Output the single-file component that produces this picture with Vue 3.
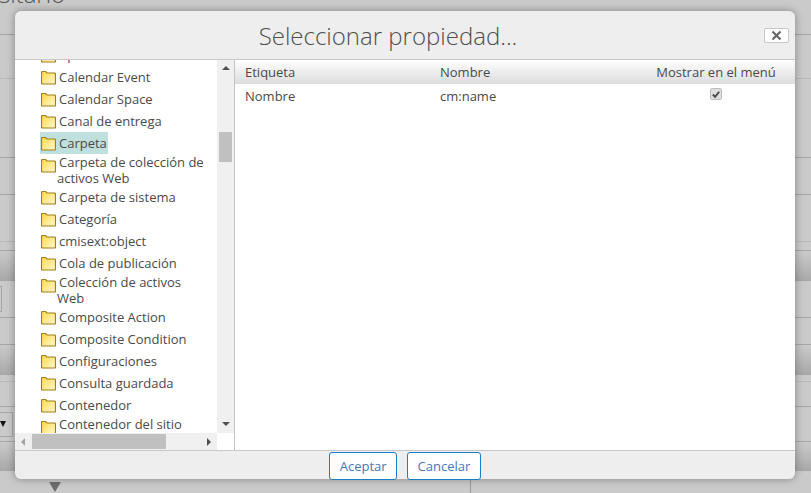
<template>
  <div class="page">
    <div class="backdrop">
      <div class="page-title">sitario</div>
      <div class="band band-34"></div>
      <div class="band band-44 soft"></div>
      <div class="band band-79"></div>
      <div class="band band-37"></div>
      <div class="band band-47 soft"></div>
      <div class="band band-9"></div>
      <div class="band band-30 shade"></div>
      <div class="band band-37 with-input"><span class="bg-input"></span></div>
      <div class="band band-27"></div>
      <div class="band band-30 shade"></div>
      <div class="band band-7 soft"></div>
      <div class="band band-25"></div>
      <div class="band band-35 with-select"><span class="bg-select"><i></i></span></div>
      <div class="band band-29 shade"></div>
      <div class="page-foot">
        <i class="foot-arrow"></i>
        <span class="foot-line"></span>
      </div>
    </div>

    <div class="dialog">
      <header class="dialog-head">
        <h2 class="dialog-title">Seleccionar propiedad...</h2>
        <button class="close-btn" type="button" aria-label="Cerrar">
          <svg width="11" height="11" viewBox="0 0 11 11">
            <path d="M1.500 1.500l8 8M9.500 1.500l-8 8" stroke="#666" stroke-width="2.2" fill="none" />
          </svg>
        </button>
      </header>

      <div class="dialog-body">
        <aside class="tree-pane">
          <div class="tree-view">
            <div class="tree-scroll">
              <ul class="tree">
                <li v-for="item in types" :key="item" class="tree-row">
                  <span class="node" :class="{ selected: item === 'Carpeta' }">
                    <svg class="folder" width="15" height="15" viewBox="0 0 15 15">
                      <path
                        d="M.500 13V2.500q0-1 1-1h3l1.500 1.500h7.500q1 0 1 1V13q0 1-1 1h-12q-1 0-1-1z"
                        fill="url(#folderFill)"
                        stroke="#a17f14"
                        stroke-width="1.200"
                      />
                    </svg>
                    <span class="node-label">{{ item }}</span>
                  </span>
                </li>
              </ul>
            </div>
            <div class="vbar">
              <i class="arrow up"></i>
              <div class="vthumb"></div>
              <i class="arrow down"></i>
            </div>
          </div>
          <div class="tree-foot">
            <div class="hbar">
              <i class="arrow left"></i>
              <div class="hthumb"></div>
              <i class="arrow right"></i>
            </div>
            <div class="corner"></div>
          </div>
        </aside>

        <section class="props">
          <div class="props-row props-head">
            <span>Etiqueta</span>
            <span>Nombre</span>
            <span class="menu-col">Mostrar en el menú</span>
          </div>
          <div v-for="prop in properties" :key="prop.name" class="props-row">
            <span>{{ prop.label }}</span>
            <span>{{ prop.name }}</span>
            <span class="menu-col">
              <span class="check">
                <svg v-if="prop.inMenu" width="11" height="11" viewBox="0 0 11 11">
                  <path d="M2 5.500l2.500 2.500L9 2.500" stroke="#444" stroke-width="2" fill="none" />
                </svg>
              </span>
            </span>
          </div>
        </section>
      </div>

      <footer class="dialog-foot">
        <button class="action" type="button">Aceptar</button>
        <button class="action" type="button">Cancelar</button>
      </footer>
    </div>

    <svg class="defs" width="0" height="0">
      <defs>
        <linearGradient id="folderFill" x1="0" y1="0" x2="1" y2="1">
          <stop offset="0" stop-color="#ffd84f" />
          <stop offset="1" stop-color="#fff8cf" />
        </linearGradient>
      </defs>
    </svg>
  </div>
</template>

<script setup>
const types = [
  'Aplicación',
  'Calendar Event',
  'Calendar Space',
  'Canal de entrega',
  'Carpeta',
  'Carpeta de colección de activos Web',
  'Carpeta de sistema',
  'Categoría',
  'cmisext:object',
  'Cola de publicación',
  'Colección de activos Web',
  'Composite Action',
  'Composite Condition',
  'Configuraciones',
  'Consulta guardada',
  'Contenedor',
  'Contenedor del sitio Web',
]

const properties = [
  { label: 'Nombre', name: 'cm:name', inMenu: true },
]
</script>

<style>
html,
body {
  margin: 0;
  background: #cacaca;
}
</style>

<style scoped>
.page {
  position: relative;
  width: 811px;
  height: 493px;
  overflow: hidden;
  background: #cacaca;
  font-family: "Open Sans", "Liberation Sans", sans-serif;
  font-size: 13px;
  color: #4a4a4a;
}
.backdrop {
  width: 811px;
  height: 493px;
}
.page-title {
  height: 0;
  margin-left: -1px;
  font-size: 24px;
  font-weight: 300;
  line-height: 0;
  color: #555;
  transform: translateY(-6px);
}
.band {
  box-sizing: border-box;
  border-bottom: 1px solid #a6a6a6;
}
.band.soft {
  border-bottom-color: #bababa;
}
.band.shade {
  background: linear-gradient(#cacaca, #a9a9a9);
}
.band-34 { height: 35px; }
.band-44 { height: 44px; }
.band-79 { height: 79px; }
.band-37 { height: 37px; }
.band-47 { height: 47px; }
.band-9 { height: 9px; }
.band-30 { height: 30px; }
.band-27 { height: 27px; }
.band-7 { height: 7px; }
.band-25 { height: 25px; }
.band-35 { height: 35px; }
.band-29 { height: 29px; }
.with-input,
.with-select {
  display: flex;
  align-items: center;
}
.bg-input {
  box-sizing: border-box;
  width: 2px;
  height: 26px;
  border: 1px solid #a6a6a6;
  border-left: 0;
}
.bg-select {
  display: flex;
  align-items: center;
  box-sizing: border-box;
  width: 13px;
  height: 25px;
  border: 1px solid #a6a6a6;
  border-left: 0;
}
.bg-select i {
  width: 0;
  height: 0;
  margin-left: 0;
  border-left: 3px solid transparent;
  border-right: 3px solid transparent;
  border-top: 6px solid #111;
}
.page-foot {
  display: flex;
  height: 23px;
  padding-left: 49px;
}
.foot-arrow {
  width: 0;
  height: 0;
  margin-top: 11px;
  border-left: 6px solid transparent;
  border-right: 6px solid transparent;
  border-top: 10px solid #6e6e6e;
}
.foot-line {
  width: 1px;
  margin-left: 409px;
  background: #999;
}

.dialog {
  position: absolute;
  top: 11px;
  left: 15px;
  display: flex;
  flex-direction: column;
  width: 780px;
  height: 468px;
  border-radius: 6px;
  background: #eeeeee;
  box-shadow: 0 0 8px rgba(0, 0, 0, 0.35);
}
.dialog-head {
  display: flex;
  align-items: center;
  box-sizing: border-box;
  height: 49px;
  padding-right: 6px;
  border-bottom: 1px solid #c8c8c8;
}
.dialog-title {
  flex: 1;
  margin: 0;
  font-size: 24px;
  font-weight: 300;
  line-height: 47px;
  text-align: center;
  color: #4f4f4f;
}
.close-btn {
  display: flex;
  align-items: center;
  justify-content: center;
  box-sizing: border-box;
  width: 25px;
  height: 15px;
  margin-left: 3px;
  margin-top: 1px;
  padding: 0;
  border: 1px solid #c8c8c8;
  border-radius: 2px;
  background: #fff;
}
.dialog-body {
  display: flex;
  flex: 1;
  min-height: 0;
  background: #fff;
}
.tree-pane {
  display: flex;
  flex-direction: column;
  box-sizing: border-box;
  width: 220px;
  border-right: 1px solid #c4c4c4;
}
.tree-view {
  display: flex;
  flex: 1;
  min-height: 0;
}
.tree-scroll {
  flex: 1;
  min-width: 0;
  overflow: hidden;
}
.tree {
  margin: -16px 0 0;
  padding: 0 7px 0 25px;
  list-style: none;
}
.tree-row {
  display: flex;
  box-sizing: border-box;
  min-height: 22px;
}
.node {
  display: flex;
  min-width: 0;
}
.node.selected {
  background: #bfe0dc;
}
.folder {
  flex: none;
  margin: 4px 1px 0;
}
.node-label {
  align-self: center;
  padding: 1px 1px 0 0;
  line-height: 15.5px;
  text-indent: 2px;
}
.vbar {
  display: flex;
  flex-direction: column;
  align-items: center;
  box-sizing: border-box;
  width: 17px;
  background: #f0f0f0;
}
.vthumb {
  width: 13px;
  height: 30px;
  margin-top: 62px;
  margin-bottom: auto;
  background: #c0c0c0;
}
.tree-foot {
  display: flex;
  height: 17px;
}
.hbar {
  display: flex;
  align-items: center;
  flex: 1;
  padding: 0 6px;
  background: #f0f0f0;
}
.hthumb {
  width: 134px;
  height: 15px;
  margin-left: 7px;
  margin-right: auto;
  background: #c0c0c0;
}
.corner {
  width: 17px;
  background: #fff;
}
.arrow {
  flex: none;
  width: 0;
  height: 0;
  border: 0 solid transparent;
}
.arrow.up {
  margin-top: 6px;
  border-width: 0 4px 4px;
  border-bottom-color: #505050;
}
.arrow.down {
  margin-bottom: 7px;
  border-width: 4px 4px 0;
  border-top-color: #505050;
}
.arrow.left {
  border-width: 4px 4px 4px 0;
  border-right-color: #a4a4a4;
}
.arrow.right {
  border-width: 4px 0 4px 4px;
  border-left-color: #505050;
}

.props {
  flex: 1;
  min-width: 0;
}
.props-row {
  display: grid;
  grid-template-columns: 195px 207px 1fr;
  align-items: center;
  height: 24px;
}
.props-row > span {
  padding-left: 10px;
}
.props-head {
  background: linear-gradient(#ffffff, #dcdcdc);
}
.props-row > .menu-col {
  display: flex;
  justify-content: center;
  padding: 0;
}
.check {
  display: flex;
  align-items: center;
  justify-content: center;
  box-sizing: border-box;
  width: 12px;
  height: 12px;
  margin-top: -4px;
  border: 1px solid #bdbdbd;
  border-radius: 2px;
  background: #dedede;
}
.dialog-foot {
  display: flex;
  justify-content: center;
  gap: 10px;
  box-sizing: border-box;
  height: 29px;
  padding-top: 1px;
  border-top: 1px solid #c8c8c8;
}
.action {
  height: 28px;
  padding: 0 9.5px;
  border: 1px solid #1a7fc4;
  border-radius: 3px;
  background: #fff;
  font: inherit;
  color: #4478b8;
}
.defs {
  position: absolute;
}
</style>
